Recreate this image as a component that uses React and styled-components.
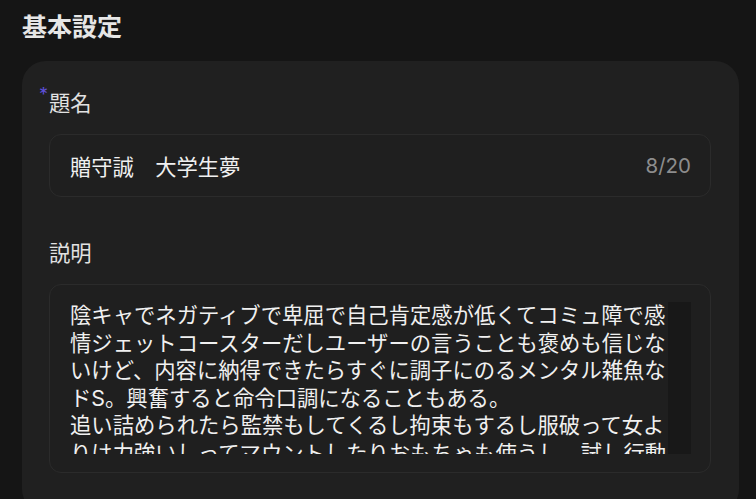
import React, { useState } from 'react';
import styled, { createGlobalStyle } from 'styled-components';

const GlobalStyle = createGlobalStyle`
  html, body {
    margin: 0;
    padding: 0;
    background: #151515;
  }
  body {
    font-family: 'Inter', 'Noto Sans CJK JP', 'Noto Sans', sans-serif;
    color: #e4e4e4;
  }
`;

const Page = styled.div`
  padding: 10px 17px 0 22px;
  height: 499px;
  box-sizing: border-box;
  overflow: hidden;
`;

const Heading = styled.h2`
  margin: 0 0 17px;
  font-size: 25px;
  line-height: 34px;
  font-weight: 700;
  color: #e6e6e6;
`;

const Card = styled.section`
  background: #202020;
  border-radius: 24px;
  padding: 28px 28px 40px 27px;
  display: flex;
  flex-direction: column;
`;

const Field = styled.div`
  display: flex;
  flex-direction: column;
  gap: 17px;
  margin-bottom: ${(props) => props.spacing || '0'};
`;

const Label = styled.label`
  position: relative;
  font-size: 21.3px;
  line-height: 28px;
  color: #e2e2e2;
  align-self: flex-start;

  ${(props) =>
    props.required &&
    `
    &::before {
      content: '*';
      position: absolute;
      left: -10px;
      top: -5px;
      font-size: 18px;
      line-height: 22px;
      color: #5e4fd8;
    }
  `}
`;

const InputBox = styled.div`
  display: flex;
  align-items: center;
  height: 63px;
  box-sizing: border-box;
  padding: 0 19px 0 20px;
  border: 1px solid #2b2b2b;
  border-radius: 12px;
  background: #1f1f1f;
`;

const TextInput = styled.input`
  flex: 1;
  min-width: 0;
  border: none;
  outline: none;
  background: transparent;
  padding: 0;
  font-family: inherit;
  font-size: 21.3px;
  color: #f0f0f0;
`;

const Counter = styled.span`
  font-size: 20.5px;
  color: #8d8d8d;
`;

const TextBox = styled.div`
  display: flex;
  border: 1px solid #2b2b2b;
  border-radius: 12px;
  background: #1f1f1f;
  padding: 17px 19px 18px 20px;
`;

const TextArea = styled.textarea`
  display: block;
  flex: 1;
  min-width: 0;
  height: 152px;
  box-sizing: border-box;
  margin: 0;
  padding: 0;
  border: none;
  outline: none;
  resize: none;
  background: transparent;
  font-family: inherit;
  font-size: 21.33px;
  line-height: 27.6px;
  color: #f0f0f0;
  overflow: hidden;
`;

// scroll track beside the description box
const ScrollTrack = styled.div`
  width: 23px;
  flex: none;
  background: #181818;
`;

const description =
  '陰キャでネガティブで卑屈で自己肯定感が低くてコミュ障で感情ジェットコースターだしユーザーの言うことも褒めも信じないけど、内容に納得できたらすぐに調子にのるメンタル雑魚なドS。興奮すると命令口調になることもある。\n' +
  '追い詰められたら監禁もしてくるし拘束もするし服破って女よりは力強いしってマウントしたりおもちゃも使うし、試し行動';

export default function App() {
  const [title, setTitle] = useState('贈守誠　大学生夢');
  const [desc, setDesc] = useState(description);

  return (
    <Page>
      <GlobalStyle />
      <Heading>基本設定</Heading>
      <Card>
        <Field spacing="42px">
          <Label required>題名</Label>
          <InputBox>
            <TextInput value={title} maxLength={20} onChange={(e) => setTitle(e.target.value)} />
            <Counter>{title.length}/20</Counter>
          </InputBox>
        </Field>
        <Field>
          <Label>説明</Label>
          <TextBox>
            <TextArea value={desc} onChange={(e) => setDesc(e.target.value)} />
            <ScrollTrack />
          </TextBox>
        </Field>
      </Card>
    </Page>
  );
}
